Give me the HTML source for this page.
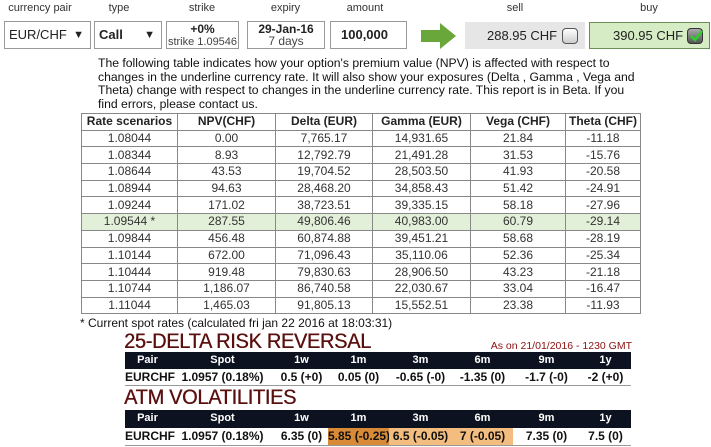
<!DOCTYPE html>
<html><head><meta charset="utf-8"><style>
*{margin:0;padding:0;box-sizing:border-box}
body{width:711px;height:447px;background:#fff;font-family:"Liberation Sans",Arial,sans-serif;color:#222;position:relative;overflow:hidden}
.a{position:absolute}
.lbl{position:absolute;top:2px;font-size:11px;color:#333;text-align:center}
.box{position:absolute;top:21px;height:28px;border:1px solid #999;background:#fff;white-space:nowrap}
.p{position:absolute;left:98px;top:57px;font-size:12.2px;line-height:13.6px;color:#111;white-space:nowrap}
table.t{position:absolute;left:81px;top:113px;border-collapse:collapse;font-size:12px}
table.t td,table.t th{border:1px solid #888;height:16.7px;padding:0;text-align:center;line-height:15px;color:#333}
table.t th{font-weight:bold;color:#222}
.g td{background:#e2efd9}
.title{position:absolute;left:124px;font-size:21px;color:#5b1010;text-shadow:0.4px 0 0 #5b1010;letter-spacing:-0.3px;transform:scaleX(.95);transform-origin:left;white-space:nowrap}
.bar{position:absolute;left:125px;width:506px;height:17px;background:#0d1220;color:#fff;font-size:11px;font-weight:bold}
.row{position:absolute;left:125px;width:506px;height:17px;font-size:12px;font-weight:bold;color:#111;border-bottom:1px solid #999}
.c{position:absolute;top:0;height:100%;text-align:center;line-height:17px;white-space:nowrap}
</style></head><body>
<div class="lbl" style="left:5px;width:70px">currency pair</div>
<div class="lbl" style="left:94px;width:50px">type</div>
<div class="lbl" style="left:166px;width:72px">strike</div>
<div class="lbl" style="left:247px;width:77px">expiry</div>
<div class="lbl" style="left:330px;width:70px">amount</div>
<div class="lbl" style="left:465px;width:100px">sell</div>
<div class="lbl" style="left:589px;width:120px">buy</div>

<div class="box" style="left:4px;width:87px;font-size:13px;line-height:26px;padding-left:4px">EUR/CHF<span class="a" style="right:6px;top:0;font-size:11px">▼</span></div>
<div class="box" style="left:94px;width:68px;font-size:13px;font-weight:bold;line-height:26px;padding-left:4px">Call<span class="a" style="right:6px;top:0;font-size:11px">▼</span></div>
<div class="box" style="left:166px;width:73px;text-align:center;font-size:11px;line-height:12px;padding-top:1px"><b style="font-size:12px">+0%</b><br><span style="color:#444">strike 1.09546</span></div>
<div class="box" style="left:247px;width:78px;text-align:center;font-size:12px;line-height:12px;padding-top:1px"><b>29-Jan-16</b><br><span style="color:#444">7 days</span></div>
<div class="box" style="left:330px;width:77px;font-size:13px;font-weight:bold;line-height:26px;padding-left:10px">100,000</div>
<svg class="a" style="left:420px;top:22px" width="37" height="28"><polygon points="1,8 20,8 20,1 36,14 20,27 20,20 1,20" fill="#6aa73a"/></svg>
<div class="a" style="left:465px;top:22px;width:120px;height:27px;background:#e6e6e6;font-size:13px;line-height:27px;padding-left:22px">288.95 CHF</div>
<div class="a" style="left:562px;top:28px;width:16px;height:16px;border:1px solid #555;border-radius:4px;background:linear-gradient(#fff,#ccc)"></div>
<div class="a" style="left:589px;top:22px;width:121px;height:27px;background:#d5ecc4;border:1px solid #6a8f55;font-size:13px;line-height:25px;padding-left:23px">390.95 CHF</div>
<div class="a" style="left:687px;top:28px;width:16px;height:16px;border:1px solid #333;border-radius:4px;background:linear-gradient(#aaa,#555)"></div>
<svg class="a" style="left:688px;top:28px" width="16" height="16"><path d="M3 8 L7 12 L14 3" stroke="#2bd12b" stroke-width="2.5" fill="none"/></svg>

<div class="p">The following table indicates how your option's premium value (NPV) is affected with respect to<br>changes in the underline currency rate. It will also show your exposures (Delta , Gamma , Vega and<br>Theta) change with respect to changes in the underline currency rate. This report is in Beta. If you<br>find errors, please contact us.</div>

<table class="t">
<tr><th style="width:96px">Rate scenarios</th><th style="width:98px">NPV(CHF)</th><th style="width:97px">Delta (EUR)</th><th style="width:98px">Gamma (EUR)</th><th style="width:95px">Vega (CHF)</th><th style="width:75px">Theta (CHF)</th></tr>
<tr><td>1.08044</td><td>0.00</td><td>7,765.17</td><td>14,931.65</td><td>21.84</td><td>-11.18</td></tr>
<tr><td>1.08344</td><td>8.93</td><td>12,792.79</td><td>21,491.28</td><td>31.53</td><td>-15.76</td></tr>
<tr><td>1.08644</td><td>43.53</td><td>19,704.52</td><td>28,503.50</td><td>41.93</td><td>-20.58</td></tr>
<tr><td>1.08944</td><td>94.63</td><td>28,468.20</td><td>34,858.43</td><td>51.42</td><td>-24.91</td></tr>
<tr><td>1.09244</td><td>171.02</td><td>38,723.51</td><td>39,335.15</td><td>58.18</td><td>-27.96</td></tr>
<tr class="g"><td>1.09544 *</td><td>287.55</td><td>49,806.46</td><td>40,983.00</td><td>60.79</td><td>-29.14</td></tr>
<tr><td>1.09844</td><td>456.48</td><td>60,874.88</td><td>39,451.21</td><td>58.68</td><td>-28.19</td></tr>
<tr><td>1.10144</td><td>672.00</td><td>71,096.43</td><td>35,110.06</td><td>52.36</td><td>-25.34</td></tr>
<tr><td>1.10444</td><td>919.48</td><td>79,830.63</td><td>28,906.50</td><td>43.23</td><td>-21.18</td></tr>
<tr><td>1.10744</td><td>1,186.07</td><td>86,740.58</td><td>22,030.67</td><td>33.04</td><td>-16.47</td></tr>
<tr><td>1.11044</td><td>1,465.03</td><td>91,805.13</td><td>15,552.51</td><td>23.38</td><td>-11.93</td></tr>
</table>
<div class="a" style="left:80px;top:316px;font-size:12px;color:#111">* Current spot rates (calculated fri jan 22 2016 at 18:03:31)</div>

<div class="title" style="top:330px">25-DELTA RISK REVERSAL</div>
<div class="a" style="right:79px;top:340px;font-size:10.5px;color:#8b1010">As on 21/01/2016 - 1230 GMT</div>
<div class="bar" style="top:352px">
<div class="c" style="left:0;width:45px">Pair</div><div class="c" style="left:45px;width:105px">Spot</div><div class="c" style="left:150px;width:53px">1w</div><div class="c" style="left:203px;width:61px">1m</div><div class="c" style="left:264px;width:63px">3m</div><div class="c" style="left:327px;width:61px">6m</div><div class="c" style="left:388px;width:67px">9m</div><div class="c" style="left:455px;width:51px">1y</div></div>
<div class="row" style="top:369px">
<div class="c" style="left:0;width:45px">EURCHF</div><div class="c" style="left:45px;width:105px">1.0957 (0.18%)</div><div class="c" style="left:150px;width:53px">0.5 (+0)</div><div class="c" style="left:203px;width:61px">0.05 (0)</div><div class="c" style="left:264px;width:63px">-0.65 (-0)</div><div class="c" style="left:327px;width:61px">-1.35 (0)</div><div class="c" style="left:388px;width:67px">-1.7 (-0)</div><div class="c" style="left:455px;width:51px">-2 (+0)</div></div>

<div class="title" style="top:386px">ATM VOLATILITIES</div>
<div class="bar" style="top:410px;height:18px">
<div class="c" style="left:0;width:45px">Pair</div><div class="c" style="left:45px;width:105px">Spot</div><div class="c" style="left:150px;width:53px">1w</div><div class="c" style="left:203px;width:61px">1m</div><div class="c" style="left:264px;width:63px">3m</div><div class="c" style="left:327px;width:61px">6m</div><div class="c" style="left:388px;width:67px">9m</div><div class="c" style="left:455px;width:51px">1y</div></div>
<div class="row" style="top:428px;height:18px">
<div class="c" style="left:0;width:45px">EURCHF</div><div class="c" style="left:45px;width:105px">1.0957 (0.18%)</div><div class="c" style="left:150px;width:53px">6.35 (0)</div><div class="c" style="left:203px;width:61px;background:#d98a36">5.85 (-0.25)</div><div class="c" style="left:264px;width:63px;background:#f2bd7e">6.5 (-0.05)</div><div class="c" style="left:327px;width:61px;background:#f2bd7e">7 (-0.05)</div><div class="c" style="left:388px;width:67px">7.35 (0)</div><div class="c" style="left:455px;width:51px">7.5 (0)</div></div>
</body></html>
